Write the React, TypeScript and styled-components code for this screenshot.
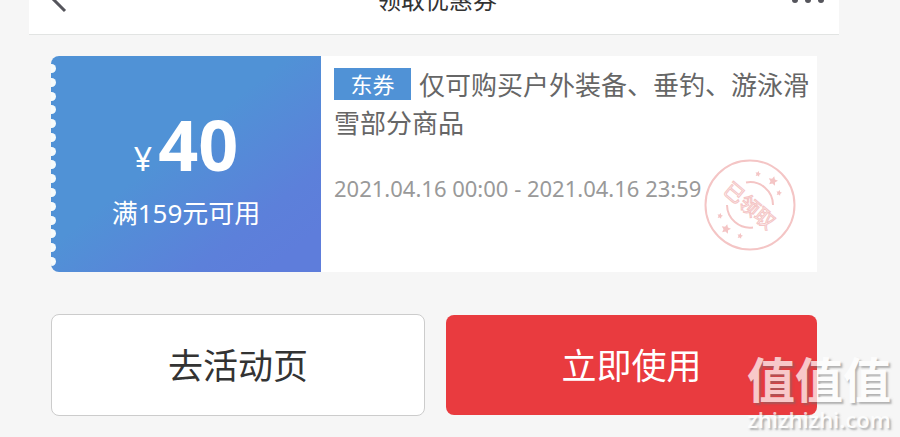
import React from "react";
import styled, { createGlobalStyle } from "styled-components";

const GlobalStyle = createGlobalStyle`
  * { box-sizing: border-box; }
  body {
    margin: 0;
    background: #f6f6f6;
    font-family: "Noto Sans", "Noto Sans CJK SC", sans-serif;
  }
`;

const Page = styled.main`
  position: relative;
  min-height: 100vh;
  padding: 0 61px 21px 29px;
  overflow: hidden;
`;

const Header = styled.header`
  display: flex;
  align-items: flex-end;
  height: 35px;
  overflow: hidden;
  background: #fff;
  border-bottom: 1px solid #e2e4e3;
`;

const HeaderBar = styled.div`
  display: grid;
  grid-template-columns: 1fr auto 1fr;
  align-items: center;
  width: 100%;
  height: 68px;
  flex: none;
  padding: 0 14px 0 20px;
`;

const Title = styled.h1`
  margin: 0;
  font-size: 24px;
  line-height: 36px;
  font-weight: 400;
  color: #333;
`;

const IconButton = styled.button<{ $end?: boolean }>`
  display: flex;
  justify-self: ${(p) => (p.$end ? "end" : "start")};
  padding: 0;
  border: 0;
  background: none;
  color: #55555c;
`;

const Content = styled.div`
  display: flex;
  flex-direction: column;
  gap: 42px;
  padding: 21px 22px 0;
`;

const Coupon = styled.article`
  display: flex;
  min-height: 216px;
  background: #fff;
  border-radius: 8px 0 0 8px;
  overflow: hidden;
`;

const Value = styled.div`
  display: flex;
  flex: 0 0 270px;
  background: linear-gradient(to bottom right, #5092d6 44%, #5c80da 76%, #5e7ddb 90%);
  color: #fff;
`;

const Perforation = styled.div`
  display: flex;
  flex-direction: column;
  justify-content: space-between;
  width: 5px;
  padding: 8px 0 6px;
`;

const Notch = styled.span`
  height: 9px;
  border-radius: 0 5px 5px 0;
  background: #f6fbfb;
`;

const ValueText = styled.div`
  display: flex;
  flex: 1;
  flex-direction: column;
  align-items: center;
  padding: 50px 5px 0 0;
`;

const Amount = styled.div`
  display: flex;
  align-items: baseline;
  gap: 6px;
  height: 76px;
  line-height: 76px;
  font-size: 32px;
`;

const Figure = styled.strong`
  font-family: "Open Sans", sans-serif;
  font-size: 70px;
  font-weight: 700;
`;

const Condition = styled.div`
  margin-top: 12px;
  font-size: 26px;
  line-height: 38px;
`;

const Details = styled.div`
  position: relative;
  flex: 1;
  min-width: 0;
  padding: 10px 0 0 13px;
`;

const Scope = styled.p`
  margin: 0;
  font-size: 26px;
  line-height: 38px;
  color: #666;
`;

const Tag = styled.span`
  display: inline-block;
  width: 77px;
  margin-right: 8px;
  background: #5092d6;
  color: #fff;
  font-size: 22px;
  line-height: 32px;
  text-align: center;
  vertical-align: top;
  margin-top: 2px;
`;

const Validity = styled.p`
  margin: 30px 0 0;
  font-size: 22px;
  line-height: 32px;
  color: #999;
`;

const Stamp = styled.svg`
  position: absolute;
  right: 20px;
  bottom: 20px;
`;

const Actions = styled.div`
  display: grid;
  grid-template-columns: 374fr 371fr;
  gap: 21px;
`;

const Action = styled.button<{ $primary?: boolean }>`
  height: ${(p) => (p.$primary ? "100px" : "102px")};
  align-self: center;
  padding: 2px 0 0;
  border: ${(p) => (p.$primary ? "0" : "1px solid #ccc")};
  border-radius: 8px;
  background: ${(p) => (p.$primary ? "#e93b3f" : "#fff")};
  color: ${(p) => (p.$primary ? "#fff" : "#333")};
  font-family: inherit;
  font-size: 35px;
  line-height: 50px;
`;

const Watermark = styled.div`
  position: absolute;
  right: 9px;
  bottom: 4px;
  color: #fff;
  opacity: 0.72;
  text-align: center;
  text-shadow: 2px 2px 2px rgba(110, 110, 110, 0.7);
  pointer-events: none;
`;

const WatermarkName = styled.div`
  font-family: "Noto Sans CJK SC", sans-serif;
  font-size: 48px;
  line-height: 56px;
  font-weight: 700;
`;

const WatermarkSite = styled.div`
  font-family: "Open Sans", sans-serif;
  font-size: 22px;
  line-height: 28px;
  font-weight: 600;
`;

const star = (cx: number, cy: number, r: number) =>
  Array.from({ length: 10 }, (_, i) => {
    const a = -Math.PI / 2 + (i * Math.PI) / 5 + 0.25;
    const d = i % 2 ? r * 0.5 : r;
    return `${cx + d * Math.cos(a)},${cy + d * Math.sin(a)}`;
  }).join(" ");

const STARS: [number, number, number][] = [
  [69, 22, 5],
  [54, 15, 3],
  [75, 34, 3],
  [22, 70, 5],
  [16, 57, 3],
  [36, 77, 3],
];

const ClaimedStamp = () => (
  <Stamp width="93" height="93" viewBox="0 0 93 93" fill="none" stroke="#f4c5c5">
    <circle cx="46" cy="46" r="44.5" strokeWidth="2" />
    <path d="M42 23.5A23 23 0 0 1 69 46M23 46A23 23 0 0 0 49 68.5" strokeWidth="2" />
    <g fill="#f4c5c5" stroke="none">
      {STARS.map(([x, y, r]) => (
        <polygon key={`${x}-${y}`} points={star(x, y, r)} />
      ))}
    </g>
    <text
      x="46"
      y="54"
      textAnchor="middle"
      transform="rotate(40 46 46)"
      fontSize="20"
      fontWeight="400"
      fontFamily="Noto Sans CJK SC, sans-serif"
      fill="#fff"
      strokeWidth="1"
    >
      已领取
    </text>
  </Stamp>
);

export default function App() {
  return (
    <Page>
      <GlobalStyle />
      <Header>
        <HeaderBar>
          <IconButton aria-label="返回">
            <svg width="20" height="32" viewBox="0 0 20 32" fill="none" stroke="currentColor" strokeWidth="3">
              <path d="M16 2L3 14L16 27" />
            </svg>
          </IconButton>
          <Title>领取优惠券</Title>
          <IconButton $end aria-label="更多">
            <svg width="34" height="8" viewBox="0 0 34 8" fill="currentColor">
              <circle cx="4" cy="4" r="3" />
              <circle cx="17" cy="4" r="3" />
              <circle cx="30" cy="4" r="3" />
            </svg>
          </IconButton>
        </HeaderBar>
      </Header>
      <Content>
        <Coupon>
          <Value>
            <Perforation>
              {Array.from({ length: 15 }, (_, i) => (
                <Notch key={i} />
              ))}
            </Perforation>
            <ValueText>
              <Amount>
                ¥<Figure>40</Figure>
              </Amount>
              <Condition>满159元可用</Condition>
            </ValueText>
          </Value>
          <Details>
            <Scope>
              <Tag>东券</Tag>
              仅可购买户外装备、垂钓、游泳滑雪部分商品
            </Scope>
            <Validity>2021.04.16 00:00 - 2021.04.16 23:59</Validity>
            <ClaimedStamp />
          </Details>
        </Coupon>
        <Actions>
          <Action>去活动页</Action>
          <Action $primary>立即使用</Action>
        </Actions>
      </Content>
      <Watermark>
        <WatermarkName>值值值</WatermarkName>
        <WatermarkSite>zhizhizhi.com</WatermarkSite>
      </Watermark>
    </Page>
  );
}
